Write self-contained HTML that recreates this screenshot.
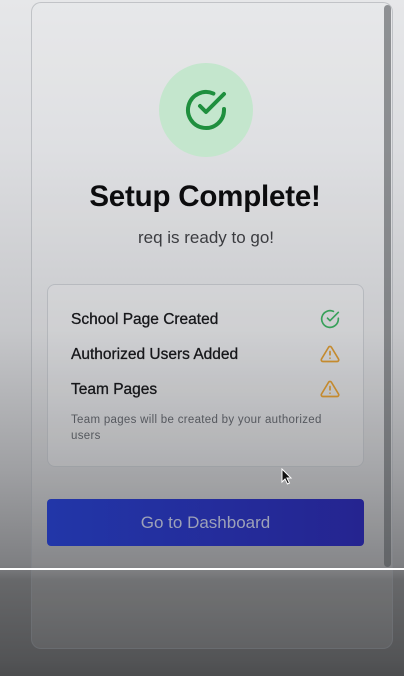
<!DOCTYPE html>
<html><head><style>
html,body{margin:0;padding:0;width:404px;height:676px;overflow:hidden;font-family:"Liberation Sans",sans-serif}
body{position:relative;background:linear-gradient(#e6e7e9 0px,#dcdde0 150px,#c6c7ca 330px,#9fa0a3 470px,#7e7f82 565px,#67686a 580px,#535456 660px,#4c4d4f 676px)}
.card{position:absolute;left:31px;top:2px;width:362px;height:647px;border:1px solid rgba(120,125,135,.35);border-radius:10px;background:rgba(255,255,255,.07);box-sizing:border-box}
.sb{position:absolute;left:384px;top:5px;width:7px;height:562px;border-radius:4px;background:rgba(70,72,76,.55)}
.line{position:absolute;left:0;top:568px;width:404px;height:2px;background:#fff}
.circ{position:absolute;left:159px;top:63px;width:94px;height:94px;border-radius:50%;background:#c4e6cd}
h1{position:absolute;left:0;width:410px;top:180px;margin:0;text-align:center;font-size:29.5px;font-weight:bold;color:#0c0c0e;letter-spacing:-.2px}
.sub{position:absolute;left:0;width:412px;top:228px;text-align:center;font-size:17px;color:#3b3c40}
.box{position:absolute;left:47px;top:284px;width:317px;height:183px;border:1px solid rgba(120,125,135,.3);border-radius:8px;background:rgba(255,255,255,.1);box-sizing:border-box}
.row{position:absolute;left:71px;font-size:15.5px;color:#16171a;-webkit-text-stroke:.3px #16171a}
.note{position:absolute;left:71px;top:412px;width:265px;font-size:11.5px;line-height:16px;color:#55585e;letter-spacing:.3px}
.btn{position:absolute;left:47px;top:499px;width:317px;height:47px;border-radius:4px;background:linear-gradient(90deg,#2236a8,#252490);color:#9da1b8;font-size:17px;text-align:center;line-height:47px}
svg{position:absolute}
</style></head><body>
<div class="card"></div>
<div class="sb"></div>
<div class="circ"></div>
<svg style="left:182px;top:86px" width="48" height="48" viewBox="0 0 24 24" fill="none" stroke="#1f8f3e" stroke-width="2" stroke-linecap="round" stroke-linejoin="round"><path d="M21 11.5V12a9 9 0 1 1-5.3-8.2"/><path d="M9 11l3 3 9-9" transform="translate(0,-1)"/></svg>
<h1>Setup Complete!</h1>
<div class="sub">req is ready to go!</div>
<div class="box"></div>
<div class="row" style="top:311px">School Page Created</div>
<div class="row" style="top:346px">Authorized Users Added</div>
<div class="row" style="top:381px">Team Pages</div>
<svg style="left:320px;top:309px" width="20" height="20" viewBox="0 0 24 24" fill="none" stroke="#38a05a" stroke-width="2" stroke-linecap="round" stroke-linejoin="round"><path d="M22 11.1V12a10 10 0 1 1-5.9-9.1"/><path d="M9 11l3 3L22 4"/></svg>
<svg style="left:320px;top:344px" width="20" height="20" viewBox="0 0 24 24" fill="none" stroke="#c48a2e" stroke-width="2" stroke-linecap="round" stroke-linejoin="round"><path d="M10.3 3.9L1.8 18a2 2 0 0 0 1.7 3h17a2 2 0 0 0 1.7-3L13.7 3.9a2 2 0 0 0-3.4 0z"/><path d="M12 9v4M12 17h.01"/></svg>
<svg style="left:320px;top:379px" width="20" height="20" viewBox="0 0 24 24" fill="none" stroke="#c48a2e" stroke-width="2" stroke-linecap="round" stroke-linejoin="round"><path d="M10.3 3.9L1.8 18a2 2 0 0 0 1.7 3h17a2 2 0 0 0 1.7-3L13.7 3.9a2 2 0 0 0-3.4 0z"/><path d="M12 9v4M12 17h.01"/></svg>
<div class="note">Team pages will be created by your authorized users</div>
<svg style="left:281px;top:468px" width="12" height="18" viewBox="0 0 12 18"><path d="M1 1v13l3-3 2.5 5 2-1-2.5-5h4z" fill="#111" stroke="#fff" stroke-width="1"/></svg>
<div class="btn">Go to Dashboard</div>
<div class="line"></div>
</body></html>
